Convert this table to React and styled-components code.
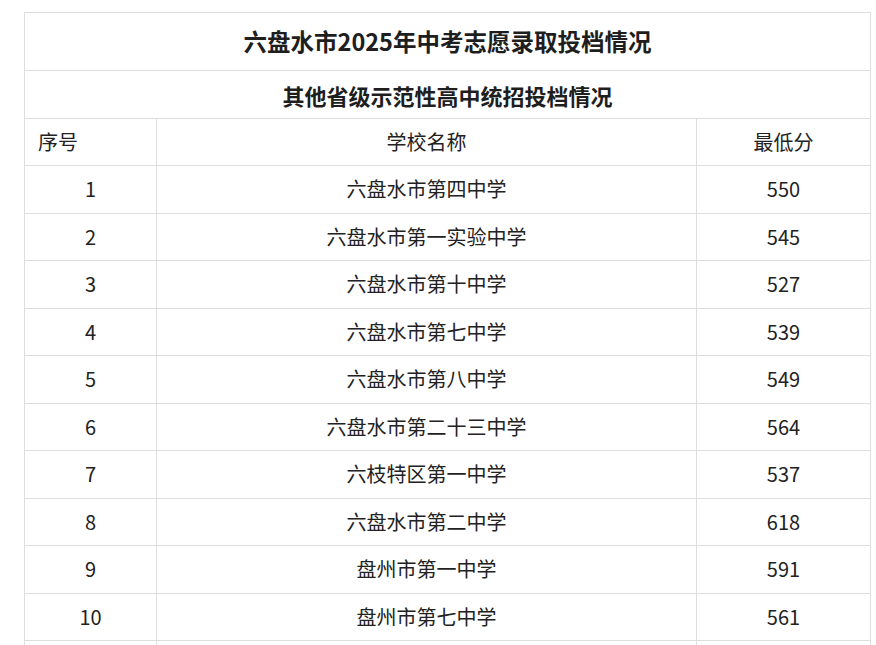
import React from "react";
import styled, { createGlobalStyle } from "styled-components";

const GlobalStyle = createGlobalStyle`
  html, body {
    margin: 0;
    padding: 0;
    background: #fff;
  }
  body {
    font-family: "Noto Sans CJK SC", "Noto Sans", sans-serif;
    color: #222;
  }
`;

const Page = styled.div`
  padding: 12px 0 0 24px;
`;

const Table = styled.table`
  width: 846px;
  border-collapse: collapse;
  table-layout: fixed;
`;

const Cell = styled.td`
  border: 1px solid #dedede;
  padding: 0 13px;
  font-size: 20px;
  line-height: 1;
  text-align: ${(p) => p.$align || "center"};
  color: #222;
`;

const TitleCell = styled(Cell)`
  font-size: ${(p) => p.$size}px;
  font-weight: 700;
  color: #1e1e1e;
`;

const Row = styled.tr`
  height: ${(p) => p.$h}px;
`;

const schools = [
  ["1", "六盘水市第四中学", "550"],
  ["2", "六盘水市第一实验中学", "545"],
  ["3", "六盘水市第十中学", "527"],
  ["4", "六盘水市第七中学", "539"],
  ["5", "六盘水市第八中学", "549"],
  ["6", "六盘水市第二十三中学", "564"],
  ["7", "六枝特区第一中学", "537"],
  ["8", "六盘水市第二中学", "618"],
  ["9", "盘州市第一中学", "591"],
  ["10", "盘州市第七中学", "561"],
];

export default function App() {
  return (
    <>
      <GlobalStyle />
      <Page>
        <Table>
          <colgroup>
            <col style={{ width: 132 }} />
            <col style={{ width: 540 }} />
            <col style={{ width: 174 }} />
          </colgroup>
          <tbody>
            <Row $h={58}>
              <TitleCell colSpan={3} $size={23.5}>
                六盘水市2025年中考志愿录取投档情况
              </TitleCell>
            </Row>
            <Row $h={48}>
              <TitleCell colSpan={3} $size={22}>
                其他省级示范性高中统招投档情况
              </TitleCell>
            </Row>
            <Row $h={47}>
              <Cell $align="left">序号</Cell>
              <Cell>学校名称</Cell>
              <Cell>最低分</Cell>
            </Row>
            {schools.map(([no, name, score]) => (
              <Row key={no} $h={47.5}>
                <Cell>{no}</Cell>
                <Cell>{name}</Cell>
                <Cell>{score}</Cell>
              </Row>
            ))}
            <Row $h={47.5}>
              <Cell />
              <Cell />
              <Cell />
            </Row>
          </tbody>
        </Table>
      </Page>
    </>
  );
}
